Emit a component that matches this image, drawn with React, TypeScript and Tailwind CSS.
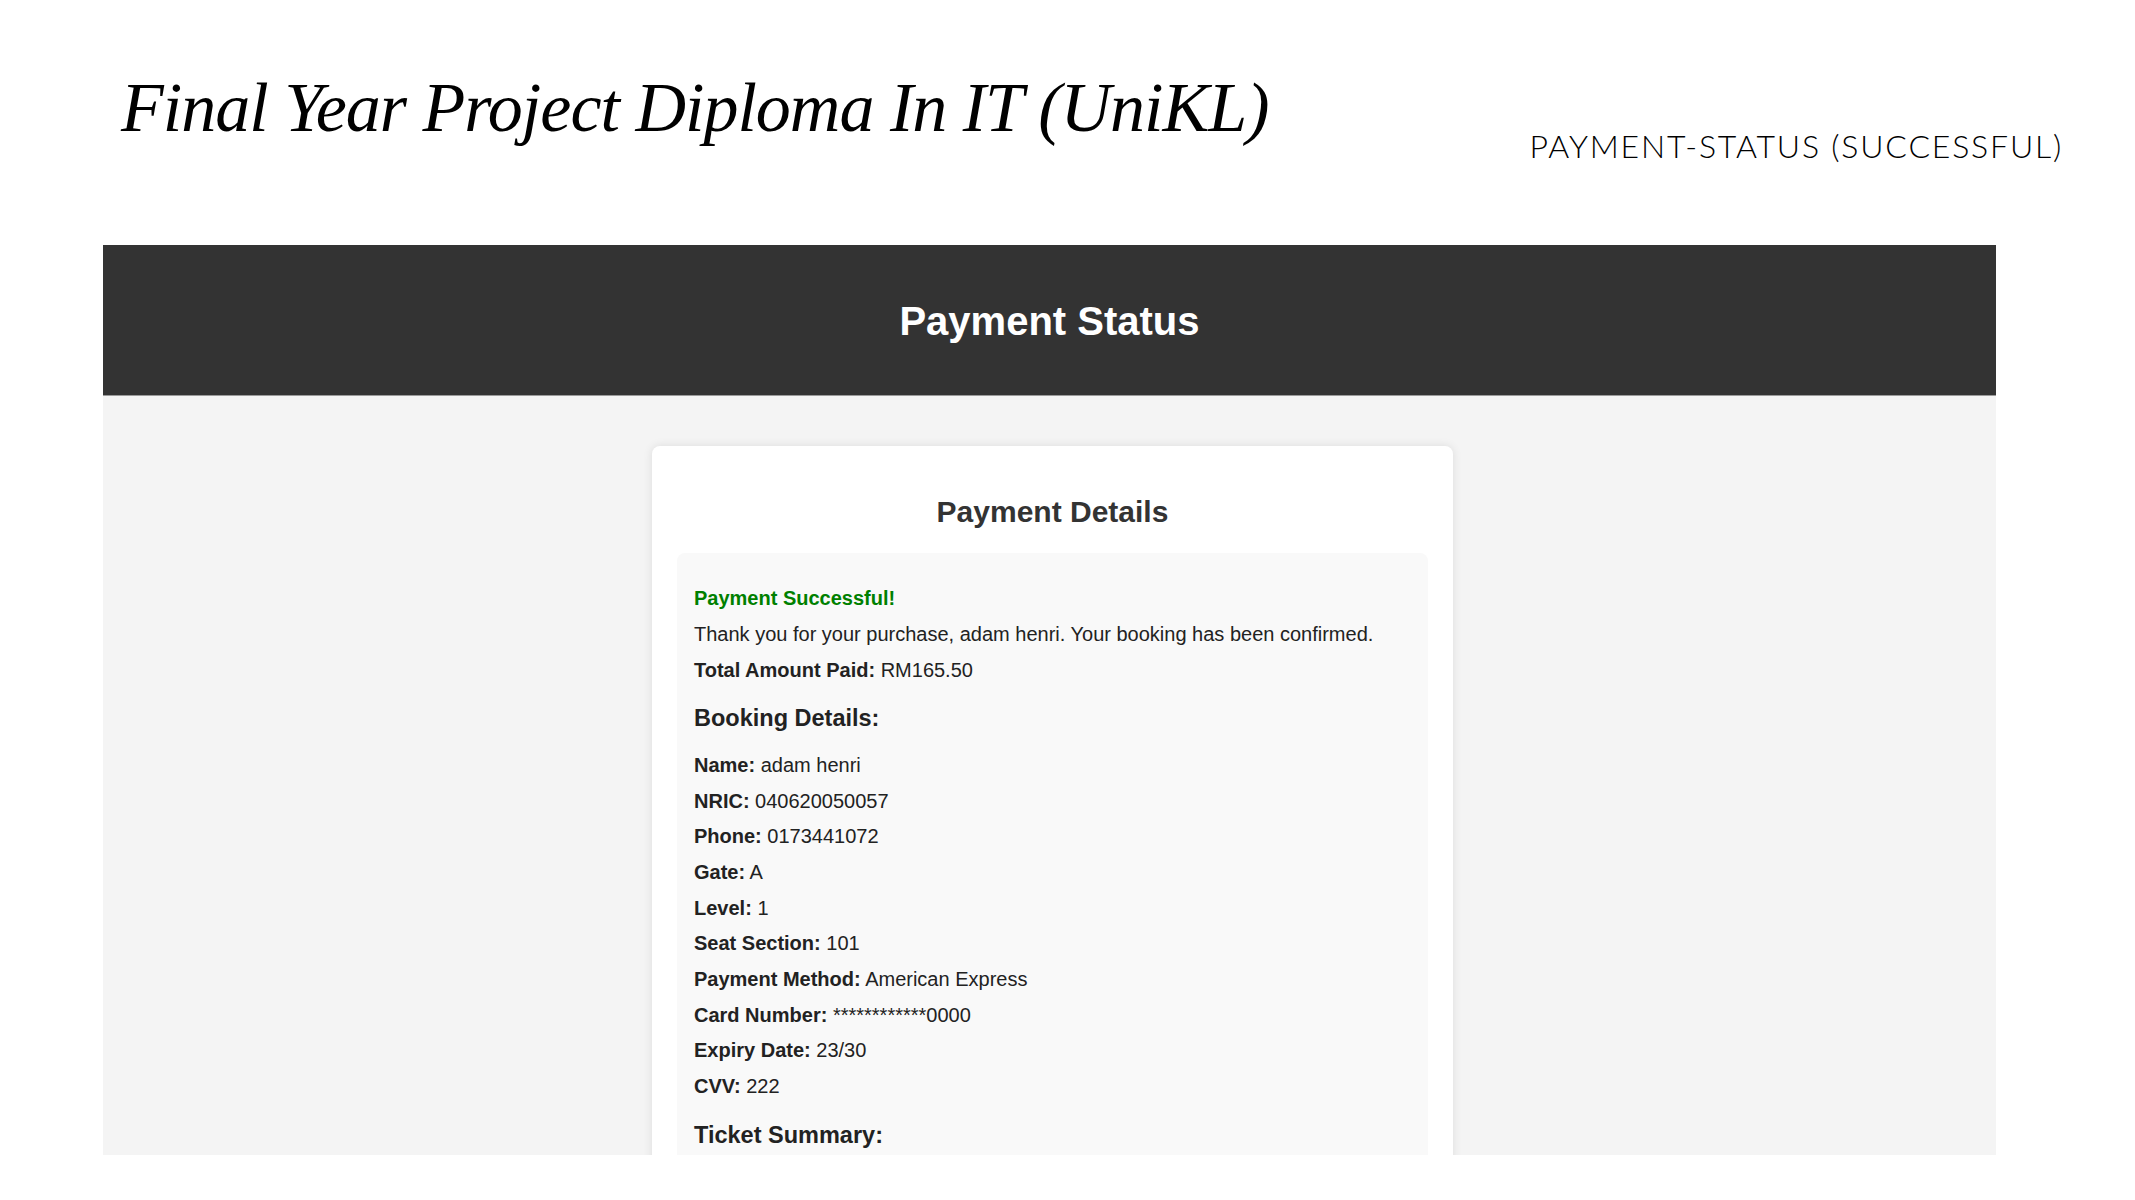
const booking = [
  { label: "Name:", value: "adam henri" },
  { label: "NRIC:", value: "040620050057" },
  { label: "Phone:", value: "0173441072" },
  { label: "Gate:", value: "A" },
  { label: "Level:", value: "1" },
  { label: "Seat Section:", value: "101" },
  { label: "Payment Method:", value: "American Express" },
  { label: "Card Number:", value: "************0000" },
  { label: "Expiry Date:", value: "23/30" },
  { label: "CVV:", value: "222" },
];

export default function App() {
  return (
    <div className="w-[2135px] h-[1200px] bg-white overflow-hidden">
      {/* Slide heading */}
      <div className="h-[245px] flex justify-between">
        <h1
          className="ml-[121px] pt-[73px] text-[70px] leading-[70px] italic tracking-[-1px] text-black"
          style={{ fontFamily: '"Liberation Serif", serif' }}
        >
          Final Year Project Diploma In IT (UniKL)
        </h1>
        <div
          className="mr-[72px] pt-[130px] text-[32px] leading-[32px] font-light tracking-[1.8px] text-black"
          style={{ fontFamily: 'Lato, "Noto Sans", sans-serif' }}
        >
          PAYMENT-STATUS (SUCCESSFUL)
        </div>
      </div>

      {/* Screenshot frame */}
      <div className="ml-[103px] w-[1893px]" style={{ fontFamily: '"Liberation Sans", Arial, sans-serif' }}>
        <header className="h-[151px] bg-[#333333] border-b border-[#9a9a9a] flex items-center justify-center pt-[2px]">
          <span className="text-white font-bold text-[40px] leading-none">Payment Status</span>
        </header>

        <div className="h-[759px] bg-[#f4f4f4] overflow-hidden pt-[50px]">
          <div className="ml-[549px] w-[801px] bg-white rounded-lg shadow-[0_0_10px_rgba(0,0,0,0.1)] px-[25px] pt-[48px] pb-10">
            <h2 className="text-center text-[30px] leading-[36px] font-bold text-[#333]">Payment Details</h2>

            <div className="mt-[23px] bg-[#f9f9f9] rounded-lg px-[17px] pt-[27px] pb-6 text-[20px] text-[#222]">
              <p className="leading-[36px] font-bold text-[#008000]">Payment Successful!</p>
              <p className="leading-[36px]">Thank you for your purchase, adam henri. Your booking has been confirmed.</p>
              <p className="leading-[36px]">
                <span className="font-bold">Total Amount Paid:</span> RM165.50
              </p>

              <h3 className="mt-[15px] text-[23.5px] leading-[30px] font-bold">Booking Details:</h3>
              <div className="mt-[15px] flex flex-col">
                {booking.map((row) => (
                  <p key={row.label} className="leading-[35.67px]">
                    <span className="font-bold">{row.label}</span> {row.value}
                  </p>
                ))}
              </div>

              <h3 className="mt-[15px] text-[23.5px] leading-[30px] font-bold">Ticket Summary:</h3>
            </div>
          </div>
        </div>
      </div>
    </div>
  );
}
